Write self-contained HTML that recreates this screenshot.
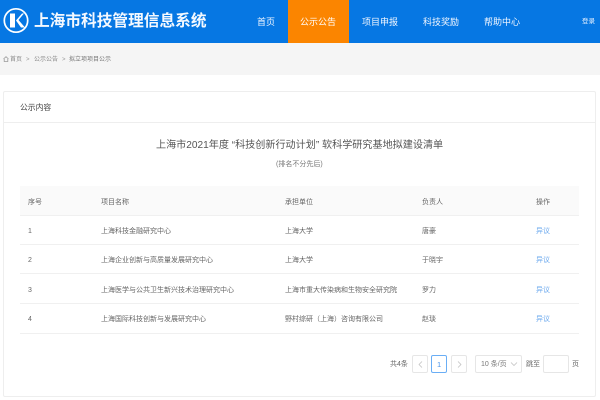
<!DOCTYPE html>
<html lang="zh"><head><meta charset="utf-8"><style>
html,body{margin:0;padding:0}
body{width:600px;height:400px;position:relative;overflow:hidden;background:#fff;font-family:"Liberation Sans","Noto Sans CJK SC",sans-serif;color:#666}
div,span{position:absolute;white-space:nowrap;line-height:1}
#w{left:0;top:0;width:600px;height:400px;filter:blur(.25px)}
.t{font-size:7px;color:#666}
.nav{font-size:9px;color:#f2f7ff;top:18px}
.line{left:20px;width:559px;height:1px;background:#f0f0f0}
.box{border:1px solid #e6e6e6;border-radius:2px;box-sizing:border-box;background:#fff}
.a{color:#6aa8ee}
.b{font-size:6px;color:#888;top:57px}
</style></head><body><div id="w">
<div style="left:0;top:0;width:600px;height:43px;background:#0677e3"></div>
<div style="left:288px;top:0;width:61px;height:43px;background:#fb8500"></div>
<svg style="position:absolute;left:3px;top:7px" width="27" height="27" viewBox="0 0 27 27"><circle cx="13" cy="13.5" r="11.7" fill="none" stroke="#fff" stroke-width="1.7"/><path d="M7 6.5h5v14H7z" fill="#fff"/><path d="M13 13.5L19 6.5h2l-5.5 6.5 6.5 7.500h-4z" fill="#fff"/></svg>
<div style="left:34px;top:14px;font-size:15.7px;font-weight:bold;color:#f4f9ff">上海市科技管理信息系统</div>
<div class="nav" style="left:257px">首页</div>
<div class="nav" style="left:300px;color:#fff">公示公告</div>
<div class="nav" style="left:362px">项目申报</div>
<div class="nav" style="left:423px">科技奖励</div>
<div class="nav" style="left:484px">帮助中心</div>
<div style="left:582px;top:19px;font-size:6.5px;color:#e8f2ff">登录</div>
<div style="left:0;top:43px;width:600px;height:32px;background:#f5f5f5"></div>
<svg style="position:absolute;left:3px;top:56px" width="6" height="6"><path d="M.5 3L3 .7 5.500 3M1.200 3v2.500h3.600V3" fill="none" stroke="#999" stroke-width=".8"/></svg>
<div class="b" style="left:10px">首页</div>
<div class="b" style="left:26px;color:#999">&gt;</div>
<div class="b" style="left:34px">公示公告</div>
<div class="b" style="left:62px;color:#999">&gt;</div>
<div class="b" style="left:69px;color:#777">拟立项项目公示</div>
<div style="left:3px;top:91px;width:593px;height:306px;box-sizing:border-box;border:1px solid #eeeeee;border-radius:2px;background:#fff"></div>
<div style="left:4px;top:122px;width:591px;height:1px;background:#eeeeee"></div>
<div style="left:20px;top:104px;font-size:7.8px;color:#444">公示内容</div>
<div style="left:156px;top:141px;font-size:10.1px;color:#555">上海市2021年度 “科技创新行动计划” 软科学研究基地拟建设清单</div>
<div style="left:276px;top:161px;font-size:7px;color:#777">(排名不分先后)</div>
<div style="left:20px;top:186px;width:559px;height:29px;background:#fafafa"></div>
<div class="line" style="top:215px"></div><div class="line" style="top:244px"></div><div class="line" style="top:303px"></div><div class="line" style="top:333px"></div><div class="line" style="top:273px"></div>
<div class="t" style="left:28px;top:199px">序号</div><div class="t" style="left:101px;top:199px">项目名称</div><div class="t" style="left:285px;top:199px">承担单位</div><div class="t" style="left:422px;top:199px">负责人</div><div class="t" style="left:536px;top:199px">操作</div>
<div class="t" style="left:28px;top:228px">1</div><div class="t" style="left:101px;top:228px">上海科技金融研究中心</div><div class="t" style="left:285px;top:228px">上海大学</div><div class="t" style="left:422px;top:228px">唐豪</div><div class="t a" style="left:536px;top:228px">异议</div>
<div class="t" style="left:28px;top:257px">2</div><div class="t" style="left:101px;top:257px">上海企业创新与高质量发展研究中心</div><div class="t" style="left:285px;top:257px">上海大学</div><div class="t" style="left:422px;top:257px">于晓宇</div><div class="t a" style="left:536px;top:257px">异议</div>
<div class="t" style="left:28px;top:287px">3</div><div class="t" style="left:101px;top:287px">上海医学与公共卫生新兴技术治理研究中心</div><div class="t" style="left:285px;top:287px">上海市重大传染病和生物安全研究院</div><div class="t" style="left:422px;top:287px">罗力</div><div class="t a" style="left:536px;top:287px">异议</div>
<div class="t" style="left:28px;top:316px">4</div><div class="t" style="left:101px;top:316px">上海国际科技创新与发展研究中心</div><div class="t" style="left:285px;top:316px">野村综研（上海）咨询有限公司</div><div class="t" style="left:422px;top:316px">赵琰</div><div class="t a" style="left:536px;top:316px">异议</div>
<div class="t" style="left:390px;top:361px">共4条</div>
<div class="box" style="left:412px;top:355px;width:16px;height:18px"></div>
<svg style="position:absolute;left:418px;top:361px" width="5" height="7"><path d="M4 .5L1 3.500 4 6.500" fill="none" stroke="#bbb" stroke-width=".7"/></svg>
<div class="box" style="left:431px;top:355px;width:16px;height:18px;border-color:#6aaef5"></div>
<div style="left:437px;top:361px;font-size:7.500px;color:#4a94ea">1</div>
<div class="box" style="left:451px;top:355px;width:16px;height:18px"></div>
<svg style="position:absolute;left:457px;top:361px" width="5" height="7"><path d="M1 .5L4 3.500 1 6.500" fill="none" stroke="#bbb" stroke-width=".7"/></svg>
<div class="box" style="left:475px;top:355px;width:47px;height:18px"></div>
<div class="t" style="left:481px;top:361px;color:#777">10 条/页</div>
<svg style="position:absolute;left:510px;top:361px" width="8" height="6"><path d="M1 1.500L4 4.500 7 1.500" fill="none" stroke="#bbb" stroke-width=".7"/></svg>
<div class="t" style="left:526px;top:361px">跳至</div>
<div class="box" style="left:543px;top:355px;width:26px;height:18px"></div>
<div class="t" style="left:572px;top:361px">页</div>
</div></body></html>
